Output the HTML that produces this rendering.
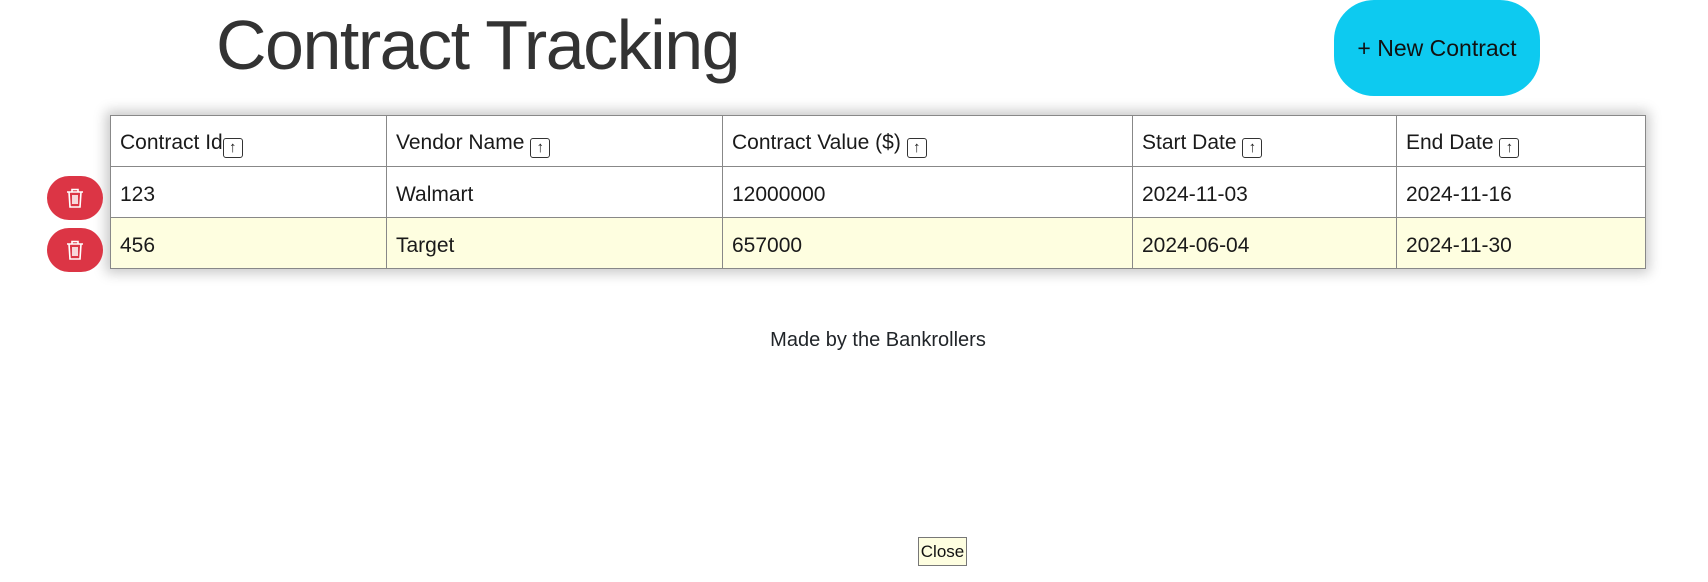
<!DOCTYPE html>
<html><head><meta charset="utf-8"><style>
body{margin:0;width:1708px;height:582px;background:#fff;font-family:"Liberation Sans",sans-serif;color:#212529;position:relative;overflow:hidden}
h1{position:absolute;left:216px;top:5px;margin:0;font-weight:300;font-size:70px;letter-spacing:-1.5px;color:#333;white-space:nowrap}
.nb{position:absolute;left:1334px;top:0;width:206px;height:96px;background:#0dcaf0;border-radius:40px;font-size:23px;color:#111;display:flex;align-items:center;justify-content:center}
.tw{position:absolute;left:110px;top:115px;width:1535px;box-shadow:0 0 12px 4px rgba(0,0,0,.22)}
table{border-collapse:collapse;width:1536px;font-size:21px;color:#1a1a1a}
td{border:1px solid #888;height:51px;padding:6px 0 0 9px;box-sizing:border-box;white-space:nowrap}
tr.y td{background:#fefee0}
.s{display:inline-block;width:20px;height:20px;border:1.5px solid #333;border-radius:3px;vertical-align:-3px;font-size:15px;text-align:center;line-height:18px;box-sizing:border-box}
.d{position:absolute;left:47px;width:56px;height:44px;border-radius:22px;background:#dc3545;display:flex;align-items:center;justify-content:center}
.f{position:absolute;left:0;width:1756px;text-align:center;top:329px;font-size:20px}
.c{position:absolute;left:918px;top:537px;width:49px;height:29px;box-sizing:border-box;border:1px solid #777;background:#fefee0;font-size:17px;text-align:center;line-height:27px;color:#111}
</style></head><body>
<h1>Contract Tracking</h1>
<div class="nb">+ New Contract</div>
<div class="tw"><table>
<tr><td style="width:276px">Contract Id<span class="s">↑</span></td><td style="width:336px">Vendor Name <span class="s">↑</span></td><td style="width:410px">Contract Value ($) <span class="s">↑</span></td><td style="width:264px">Start Date <span class="s">↑</span></td><td>End Date <span class="s">↑</span></td></tr>
<tr><td>123</td><td>Walmart</td><td>12000000</td><td>2024-11-03</td><td>2024-11-16</td></tr>
<tr class="y"><td>456</td><td>Target</td><td>657000</td><td>2024-06-04</td><td>2024-11-30</td></tr>
</table></div>
<div class="d" style="top:176px"><svg width="18" height="20" viewBox="0 0 18 20" fill="none" stroke="#fff" stroke-width="1.6"><path d="M1 4h16M6 4V1.5h6V4M3 4l1 15h10l1-15M7 7v9M9 7v9M11 7v9"/></svg></div>
<div class="d" style="top:228px"><svg width="18" height="20" viewBox="0 0 18 20" fill="none" stroke="#fff" stroke-width="1.6"><path d="M1 4h16M6 4V1.5h6V4M3 4l1 15h10l1-15M7 7v9M9 7v9M11 7v9"/></svg></div>
<div class="f">Made by the Bankrollers</div>
<div class="c">Close</div>
</body></html>
